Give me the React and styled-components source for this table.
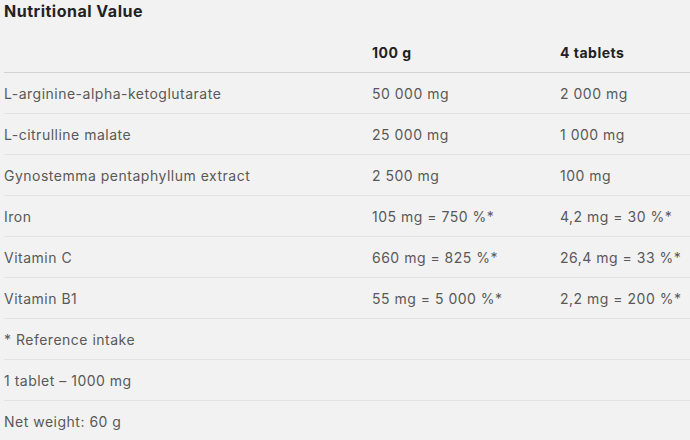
import React from "react";
import styled, { createGlobalStyle } from "styled-components";

const Global = createGlobalStyle`
  html, body { margin: 0; padding: 0; background: #f2f2f2; }
  body { font-family: Inter, "Open Sans", sans-serif; -webkit-font-smoothing: antialiased; }
`;

const Wrap = styled.div`
  padding: 0 0 0 4px;
  width: 686px;
`;

const Title = styled.h2`
  margin: 0;
  font-size: 16px;
  line-height: 22px;
  font-weight: 700;
  letter-spacing: 0.5px;
  color: #222;
`;

const Table = styled.table`
  width: 100%;
  border-collapse: collapse;
  table-layout: fixed;
`;

const HeadCell = styled.th`
  text-align: left;
  font-size: 14px;
  font-weight: 700;
  letter-spacing: 0.5px;
  color: #222;
  height: 40px;
  padding: 10px 0 0;
  vertical-align: middle;
  border-bottom: 1px solid #d2d2d2;
  width: ${(p) => p.$w || "auto"};
`;

const Row = styled.tr`
  border-bottom: 1px solid #e3e3e3;
  &:last-child { border-bottom: none; }
`;

const Cell = styled.td`
  font-size: 14px;
  letter-spacing: 0.5px;
  color: #595959;
  height: 40px;
  padding: 0;
  vertical-align: middle;
  white-space: nowrap;
`;

const rows = [
  ["L-arginine-alpha-ketoglutarate", "50 000 mg", "2 000 mg"],
  ["L-citrulline malate", "25 000 mg", "1 000 mg"],
  ["Gynostemma pentaphyllum extract", "2 500 mg", "100 mg"],
  ["Iron", "105 mg = 750 %*", "4,2 mg = 30 %*"],
  ["Vitamin C", "660 mg = 825 %*", "26,4 mg = 33 %*"],
  ["Vitamin B1", "55 mg = 5 000 %*", "2,2 mg = 200 %*"],
  ["* Reference intake", "", ""],
  ["1 tablet – 1000 mg", "", ""],
  ["Net weight: 60 g", "", ""],
];

export default function App() {
  return (
    <>
      <Global />
      <Wrap>
        <Title>Nutritional Value</Title>
        <Table>
          <thead>
            <tr>
              <HeadCell $w="368px"></HeadCell>
              <HeadCell $w="188px">100 g</HeadCell>
              <HeadCell>4 tablets</HeadCell>
            </tr>
          </thead>
          <tbody>
            {rows.map((r, i) => (
              <Row key={i}>
                <Cell>{r[0]}</Cell>
                <Cell>{r[1]}</Cell>
                <Cell>{r[2]}</Cell>
              </Row>
            ))}
          </tbody>
        </Table>
      </Wrap>
    </>
  );
}
